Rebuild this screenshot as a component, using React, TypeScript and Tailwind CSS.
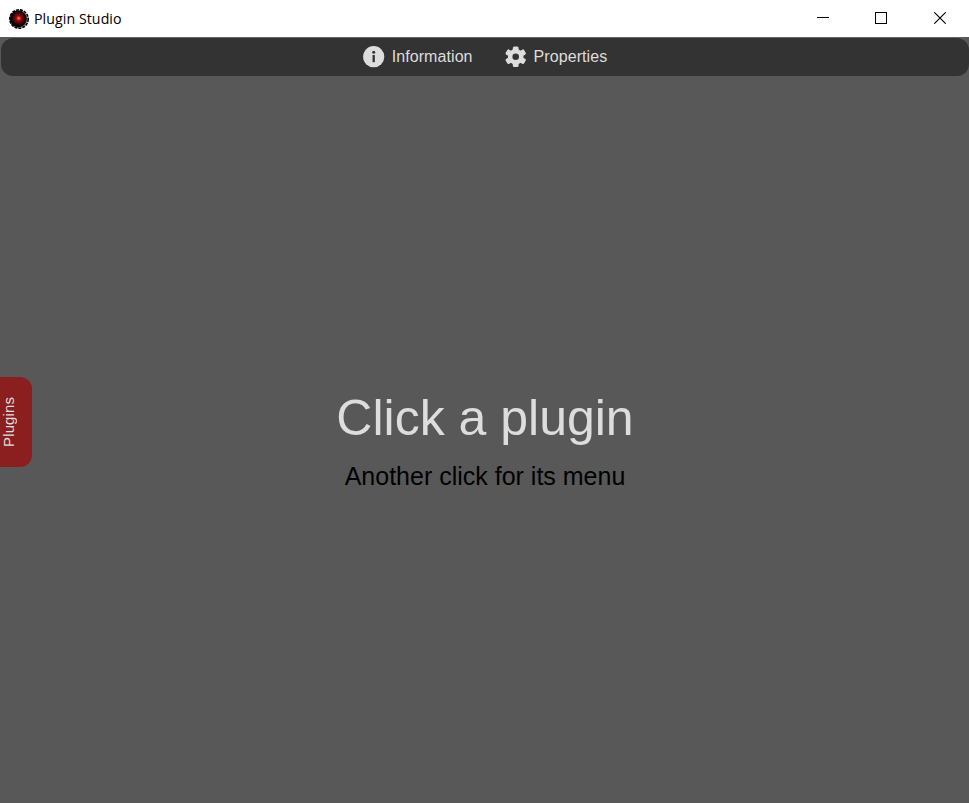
function AppIcon() {
  return (
    <svg className="h-5 w-5" viewBox="0 0 20 20">
      <defs>
        <radialGradient id="lens">
          <stop offset="0" stopColor="#ff9a85" />
          <stop offset="0.18" stopColor="#f52a1e" />
          <stop offset="0.38" stopColor="#8c0c0a" />
          <stop offset="0.8" stopColor="#3c0606" />
          <stop offset="1" stopColor="#080404" />
        </radialGradient>
      </defs>
      <circle cx="10" cy="10" r="9.2" fill="#bbb" stroke="#000" strokeWidth="1.6" strokeDasharray="3 1" />
      <circle cx="9.4" cy="10" r="8.5" fill="#060606" />
      <circle cx="9.7" cy="9.3" r="7" fill="url(#lens)" />
    </svg>
  );
}

function InfoIcon() {
  return (
    <svg className="h-[22px] w-[22px]" viewBox="0 0 22 22">
      <circle cx="10.7" cy="10.7" r="10.6" fill="#ddd" />
      <circle cx="10.7" cy="6.2" r="1.5" fill="#333" />
      <path d="M10.7 9v7.2" stroke="#333" strokeWidth="2.3" />
    </svg>
  );
}

function GearIcon() {
  return (
    <svg className="h-[22px] w-[22px]" viewBox="0 0 22 22">
      <g fill="#ddd">
        <circle cx="10.7" cy="10.7" r="7.8" />
        <rect x="7.8" y="0.4" width="5.8" height="20.6" rx="1.5" />
        <rect x="7.8" y="0.1" width="5.8" height="21.2" rx="1.5" transform="rotate(60 10.7 10.7)" />
        <rect x="7.8" y="0.1" width="5.8" height="21.2" rx="1.5" transform="rotate(120 10.7 10.7)" />
      </g>
      <circle cx="10.7" cy="10.7" r="3.3" fill="#333" />
    </svg>
  );
}

function TitleBar() {
  return (
    <header className="flex h-[37px] shrink-0 items-center bg-white pl-[9px]">
      <AppIcon />
      <span className="ml-[5px] font-['Open_Sans','Noto_Sans',sans-serif] text-[14.2px] leading-5 tracking-[0.06px] text-black">
        Plugin Studio
      </span>
      <div className="mb-px ml-auto flex items-center gap-[46px] pr-[23px]">
        <svg className="h-3 w-3" viewBox="0 0 12 12" shapeRendering="crispEdges">
          <path d="M0 5.5h12" stroke="#000" />
        </svg>
        <svg className="h-3 w-3" viewBox="0 0 12 12" shapeRendering="crispEdges">
          <path d="M.5.5h11v11H.5z" fill="none" stroke="#000" />
        </svg>
        <svg className="ml-px h-3 w-3" viewBox="0 0 12 12">
          <path d="M.3.3l11.4 11.4M11.7.3L.3 11.7" stroke="#000" strokeWidth="1.1" />
        </svg>
      </div>
    </header>
  );
}

export default function App() {
  return (
    <div className="flex h-[803px] w-[969px] flex-col overflow-hidden bg-[#585858] font-['Liberation_Sans',Arial,sans-serif]">
      <TitleBar />
      <nav className="ml-px mt-px flex h-[38px] shrink-0 items-center justify-center gap-8 rounded-xl bg-[#333] text-base text-[#ddd] shadow-[0_-1px_0_0_#646464]">
        <div className="flex items-center gap-[7px]">
          <InfoIcon />
          <span className="tracking-[0.08px]">Information</span>
        </div>
        <div className="flex items-center gap-[7px]">
          <GearIcon />
          <span className="tracking-[0.08px]">Properties</span>
        </div>
      </nav>
      <main className="flex flex-1">
        <aside className="mt-[301px] flex h-[90px] w-8 items-center rounded-r-xl bg-[#8b1e1e] text-[15px] text-[#ddd]">
          <span className="rotate-180 leading-[18px] tracking-[0.1px] [writing-mode:vertical-rl]">Plugins</span>
        </aside>
        <section className="flex flex-1 flex-col items-center pr-[31px] pt-[314px]">
          <h1 className="text-[50px] leading-[57px] text-[#ddd]">Click a plugin</h1>
          <p className="mt-[15px] text-[25px] leading-[29px] text-black">Another click for its menu</p>
        </section>
      </main>
    </div>
  );
}
